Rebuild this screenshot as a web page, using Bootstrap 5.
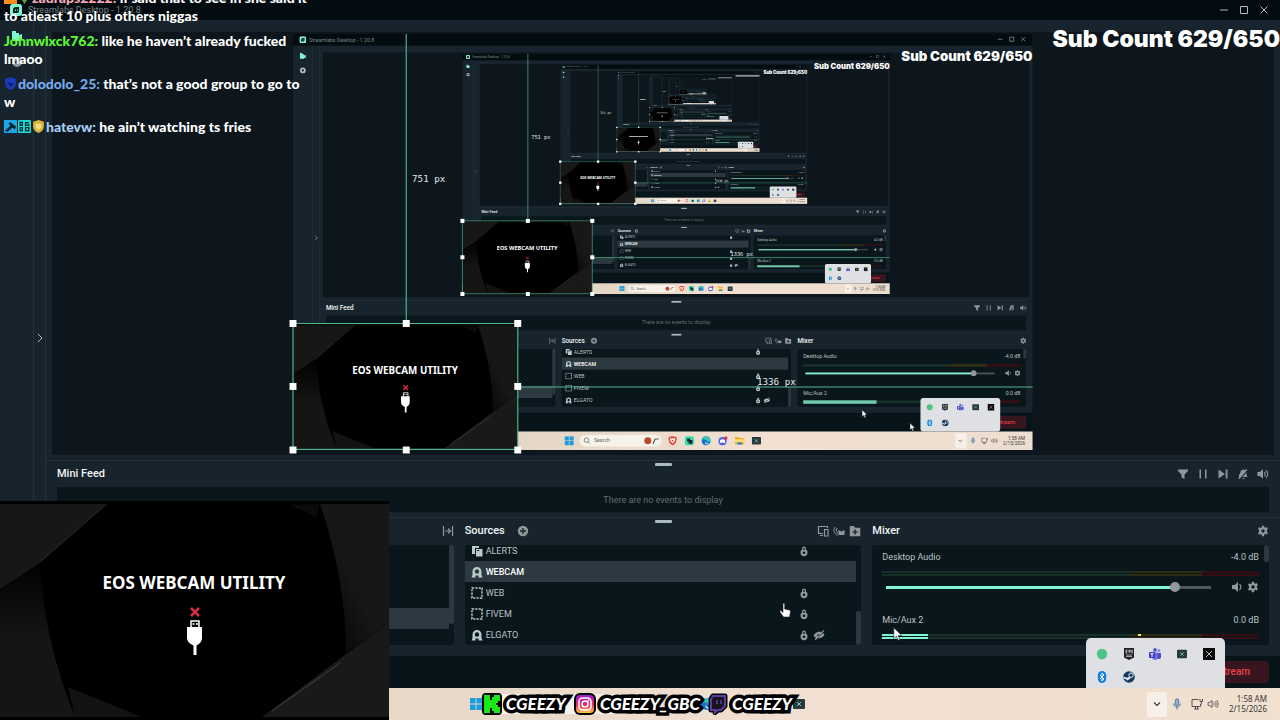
<!DOCTYPE html>
<html lang="en">
<head>
<meta charset="utf-8">
<meta name="viewport" content="width=device-width, initial-scale=1">
<title>Streamlabs Desktop</title>
<link href="https://cdn.jsdelivr.net/npm/bootstrap@5.3.0/dist/css/bootstrap.min.css" rel="stylesheet">
<style>
  :root { --panel:#17242d; --well:#09161c; --line:#24323a; --soft:#91979a; --ink:#bdc3c5; --mint:#80f5d2; }
  body { background:var(--panel); color:var(--ink); font-family:Roboto,"Liberation Sans",sans-serif; font-size:9px; line-height:12px; }
  body > * { flex-shrink:0; }
  body > .work { flex:1 1 0; min-height:0; }
  svg { display:block; flex:none; }
  .ico { width:12px; height:12px; fill:currentColor; color:var(--soft); }
  .bare { background:none; border:0; padding:0; color:inherit; }
  .titlebar { height:20px; background:#030c11; color:#7b8386; padding:0 10px; gap:6px; }
  .winbtns { gap:8px; }
  .side { width:34px; border-right:1px solid var(--line); padding-top:10px; gap:14px; }
  .fold { width:12px; border-right:1px solid var(--line); }
  .stage { flex:1 1 0; min-height:0; padding:12px 6px 5px 6px; }
  .canvas-well { flex:1 1 0; min-height:0; background:#0c161c; padding:2px 0 5px; }
  .canvas-well > svg { height:100%; aspect-ratio:16/9; overflow:visible; }
  .split { border-top:1px solid var(--line); }
  .grip { position:absolute; left:50%; top:2px; width:17px; height:3px; margin-left:-8px; border-radius:1px; background:#a9bac0; }
  .head { height:26px; }
  .feedhead { padding:0 11px; }
  .ttl { color:#f2f4f5; font-size:11px; line-height:16px; font-weight:500; margin:0; }
  .feed { height:25px; margin:0 11px 5px; background:var(--well); color:#626d72; border-radius:2px; }
  .docks { display:grid; grid-template-columns:repeat(3,minmax(0,1fr)); gap:11px; padding:0 11px 11px; }
  .well { height:100px; margin-top:1px; background:var(--well); border-radius:3px; overflow:hidden; position:relative; }
  .src { height:21px; flex:none; padding:0 31px 0 6px; margin-right:5px; gap:3px; list-style:none; }
  .src .slots { width:27px; gap:3px; }
  .src.on { background:#2d3940; color:#fff; font-weight:500; }
  .thumb { position:absolute; right:0; width:5px; border-radius:2px; background:#2d3940; }
  .mix { padding:6px 10px; }
  .meter { height:5px; margin:8px 0 6px; background:linear-gradient(var(--well),var(--well)) 0 2px/100% 1px no-repeat,linear-gradient(90deg,#18302a 66%,#2e2c12 66% 85%,#360d15 85%); position:relative; }
  .meter i { position:absolute; left:0; top:0; height:5px; border:solid var(--mint); border-width:2px 0; }
  .meter b { position:absolute; top:0; width:3px; height:2px; background:#f5e65a; }
  .fader { height:10px; margin:0 0 22px; gap:4px; padding-left:4px; }
  .vol { appearance:none; -webkit-appearance:none; height:10px; background:linear-gradient(var(--mint),var(--mint)) 0 50%/89% 3px no-repeat,linear-gradient(#4c585e,#4c585e) 0 50%/100% 3px no-repeat; margin:0; }
  .vol::-webkit-slider-thumb { -webkit-appearance:none; width:10px; height:10px; border-radius:50%; background:#91979a; }
  .foot { height:32px; background:#07141a; padding:0 11px; }
  .endbtn { background:#37161f; color:#e8424a; font-size:10px; height:22px; padding:0 19px; border:0; border-radius:3px; font-weight:500; line-height:22px; }
  .taskbar { height:32px; background:linear-gradient(90deg,#e3d7c4,#e9d9c9 40%,#f2dfd1 62%,#efe0d0); color:#3a3632; padding:0 13px 0 0; }
  .taskbar .apps { margin-left:470px; gap:16px; }
  .pill { width:141px; height:20px; border-radius:10px; background:#f8f3ea; margin-left:-5px; margin-right:-5px; }
  .more { width:20px; height:25px; background:#f7f0e8; border-radius:3px; }
  .clock { font-family:"Noto Sans",sans-serif; font-size:8px; line-height:10px; text-align:right; width:48px; }
  .tray { position:absolute; right:55px; bottom:32px; width:139px; height:50px; border-radius:5px 5px 0 0; background:#dee0e4; display:grid; grid-template-columns:repeat(5,1fr); padding:4px 3px 0; align-items:center; justify-items:center; }
  .cam { position:absolute; left:0; bottom:0; width:389px; height:219px; }
  .chat { position:absolute; left:0; top:0; width:308px; height:136px; padding-left:4px; overflow:hidden; display:flex; flex-direction:column; justify-content:flex-end; gap:7px; color:#fff; font:900 14px/18px Lato,"Open Sans",sans-serif; }
  .chat p { margin:0; }
  .chat svg { display:inline-block; width:13px; height:13px; margin-right:1px; vertical-align:-1px; }
  .subs { position:absolute; right:0; top:24px; color:#fff; font:900 23px/30px Inter,"Liberation Sans",sans-serif; }
  .socials { position:absolute; left:0; right:0; bottom:4px; gap:4px; padding-right:6px; font:italic 900 17px/24px Lato,sans-serif; color:#fff; }
  .socials span { -webkit-text-stroke:7px #000; paint-order:stroke fill; }
  .pointer { position:absolute; }
</style>
</head>
<body class="vh-100 overflow-hidden position-relative d-flex flex-column">

<svg width="0" height="0" class="position-absolute" aria-hidden="true">
  <defs>
    <linearGradient id="blade" x1="0" y1="0" x2="0" y2="1"><stop offset="0" stop-color="#020202"/><stop offset=".5" stop-color="#151515"/></linearGradient>
    <linearGradient id="blade2" x1="1" y1="0" x2="0" y2="1"><stop offset=".5" stop-color="#171717"/><stop offset="1" stop-color="#020202"/></linearGradient>
    <linearGradient id="insta" x1="0" y1="0" x2="0" y2="1"><stop offset="0" stop-color="#9a20d0"/><stop offset=".55" stop-color="#ee2a68"/><stop offset="1" stop-color="#ffc83d"/></linearGradient>
    <linearGradient id="bar" x1="0" x2="1"><stop offset=".3" stop-color="#e3d7c4"/><stop offset=".62" stop-color="#f2dfd1"/><stop offset="1" stop-color="#ecdfd0"/></linearGradient>
    <symbol id="logo" viewBox="0 0 12 12"><rect width="12" height="12" rx="3" fill="#80f5d2"/><path d="M3 6a3 3 0 0 1 3-3h3v4a2 2 0 0 1-2 2H3z" fill="#09161c"/><path d="M5.500 5.500v1.500M7.500 5.500v1.500" stroke="#80f5d2"/></symbol>
    <symbol id="camera" viewBox="0 0 12 12"><path d="M1 1h4v2h3v2l3-1v6l-3-1v2H1z" fill="#80f5d2"/></symbol>
    <symbol id="ring" viewBox="0 0 12 12"><path fill-rule="evenodd" d="M6 1a5 5 0 1 1 0 10A5 5 0 0 1 6 1zm0 3a2 2 0 1 0 0 4 2 2 0 0 0 0-4z"/></symbol>
    <symbol id="gear" viewBox="0 0 12 12"><path fill-rule="evenodd" d="M5 .8h2l.3 1.500 1 .5 1.400-.7 1.200 1.600-1 1.200v1.900l1 1.100-1.200 1.600-1.400-.7-1 .6L7 11.200H5l-.3-1.500-1-.6-1.500.7L1 8.200l1-1.200V5L1 3.800l1.200-1.600 1.500.7 1-.5zM6 4.300a1.700 1.700 0 1 0 0 3.400 1.700 1.700 0 0 0 0-3.400z"/></symbol>
    <symbol id="plus" viewBox="0 0 12 12"><path fill-rule="evenodd" d="M6 .8a5.200 5.200 0 1 1 0 10.400A5.200 5.200 0 0 1 6 .8zM5.300 3v2.300H3v1.400h2.300V9h1.400V6.700H9V5.300H6.700V3z"/></symbol>
    <symbol id="lock" viewBox="0 0 12 12"><path fill-rule="evenodd" d="M4 5V3.500a2 2 0 0 1 4 0V5h.5c.8.500 1 1.300 1 2.500C9.500 10 8 11.300 6 11.300S2.500 10 2.500 7.500c0-1.200.2-2 1-2.500zm1.200-.3h1.600V3.500c0-1-1.600-1-1.600 0zM6 6.500a1.300 1.300 0 1 0 0 2.600 1.300 1.300 0 0 0 0-2.600z"/></symbol>
    <symbol id="eye" viewBox="0 0 12 12"><path fill-rule="evenodd" d="M.5 6.500C2 3.500 6 2 8.500 3.300L10.300 1l1 .8-8.600 9.400-1-.9L3 8.900C1.800 8.300 1 7.500.5 6.500zM6.900 5C5 4.500 3.600 6 4.200 7.600zM11.500 5.500C10.600 8.200 7.600 9.800 5 9.300l5-5.200z"/></symbol>
    <symbol id="alerts" viewBox="0 0 12 12"><path d="M1 1h7v2H4v6H1z"/><path fill-rule="evenodd" d="M5 4h6.500v7.500H5zM6.200 6h2V5h-2z"/></symbol>
    <symbol id="webcam" viewBox="0 0 12 12"><path fill-rule="evenodd" d="M1.500 5.500a4.500 4.500 0 1 1 9 0V9l1 2.500H.5l1-2.500zM6 3.300a2.200 2.200 0 1 0 0 4.400 2.200 2.200 0 0 0 0-4.400zM4.500 9.500v2h3v-2z"/></symbol>
    <symbol id="dash" viewBox="0 0 12 12"><rect x="1" y="1" width="10" height="10" fill="none" stroke="currentColor" stroke-width="1.500" stroke-dasharray="2.200 1.130"/></symbol>
    <symbol id="filter" viewBox="0 0 12 12"><path d="M1 1.500h10v1.500L7.500 6.500v4.500l-3-1.500v-3L1 3z"/></symbol>
    <symbol id="pause" viewBox="0 0 12 12"><path d="M2.500 1.500H4v9H2.500zM8 1.500h1.500v9H8z"/></symbol>
    <symbol id="skip" viewBox="0 0 12 12"><path d="M1.500 1.500 8 6l-6.500 4.500zM8.700 1.500h1.800v9H8.700z"/></symbol>
    <symbol id="bell" viewBox="0 0 12 12"><path d="M2 8.500V7l1.200-1.500C3.300 2.500 5 1.500 6.500 1.500l1.700.7L9.500 1l1 .7L2.500 11l-1-.8zM9.500 4.500V7l1 2H5.500zM5.300 10h2.500c-.5 1.300-2 1.300-2.500 0z"/></symbol>
    <symbol id="sound" viewBox="0 0 12 12"><path d="M.5 4h2.300L6 1.300v9.400L2.800 8H.5z"/><path d="M7.300 4c1.200 1 1.200 3 0 4M8.800 2.200c2.600 2 2.600 5.600 0 7.600" fill="none" stroke="currentColor" stroke-width="1.100"/></symbol>
    <symbol id="sound1" viewBox="0 0 12 12"><path d="M1 4h2.600L7 1v10L3.600 8H1z"/><path d="M8.500 3.300c1.800 1.500 1.800 4 0 5.400" fill="none" stroke="currentColor" stroke-width="1.200"/></symbol>
    <symbol id="split" viewBox="0 0 12 12"><path d="M1.500 1v10M10.500 1v10M3 6h5M6 3.500 8.500 6 6 8.500" fill="none" stroke="currentColor" stroke-width="1.200"/></symbol>
    <symbol id="screens" viewBox="0 0 12 12"><path d="M6 8.500H1.500v-7h9V3M3 10.500h3M7.500 4.500h3.500v6.500H7.500z" fill="none" stroke="currentColor" stroke-width="1.200"/></symbol>
    <symbol id="wave" viewBox="0 0 12 12"><path d="M2 2C0 5 1 8.500 4.500 10.500M4 3C2.700 5.500 3.500 7.800 6 9.500" fill="none" stroke="currentColor" stroke-width="1"/><path d="M5 5l3.500 1.500 3-1.500v5H6z"/></symbol>
    <symbol id="folder" viewBox="0 0 12 12"><path fill-rule="evenodd" d="M.8 1h4l1.500 1.800h5v8.400H.8zM5.400 4.500v1.800H3.600v1.300h1.800v1.800h1.300V7.600h1.800V6.300H6.700V4.500z"/></symbol>
    <symbol id="win" viewBox="0 0 12 12"><path fill="#1d9bdc" d="M0 0h5.600v5.600H0zM6.400 0H12v5.600H6.400zM0 6.400h5.600V12H0zM6.400 6.400H12V12H6.400z"/></symbol>
    <symbol id="brave" viewBox="0 0 12 12"><path fill="#e8402c" d="M3 0h6l2.500 2.500L10 9l-4 3-4-3L.5 2.500z"/><path fill="#fff" d="m2.500 2.500 2 .5h3l2-.5-.8 4L6 9.500 3.300 6.500z"/><path fill="#e8402c" d="m4.300 4.500 1.700.8 1.700-.8L6 8z"/></symbol>
    <symbol id="green" viewBox="0 0 12 12"><rect width="12" height="12" rx="3" fill="#35dca2"/><path d="M3 3h4v2h3v5H5V7H3z" fill="#123"/></symbol>
    <symbol id="edge" viewBox="0 0 12 12"><circle cx="6" cy="6" r="6" fill="#1273c4"/><path d="M0 5c1-6 11-7 12 0 0 3-4 3-5 2 1-2-4-4-7-2z" fill="#39c6b4"/><path d="M5 6.500c0 3 3 4 6 2.500-2 3-8 2-6-2.500z" fill="#e8f4f8"/></symbol>
    <symbol id="discord" viewBox="0 0 12 12"><circle cx="5.500" cy="6.500" r="5.500" fill="#5560e6"/><path d="M2.500 5c2-1.300 4-1.300 6 0l.7 3.500-2 .5-.5-.8H4.500L4 9l-2-.5z" fill="#fff"/><circle cx="10" cy="2.300" r="2.300" fill="#d8304a"/></symbol>
    <symbol id="files" viewBox="0 0 12 12"><path d="M0 1h5l1 1.500h6V11H0z" fill="#eeb420"/><path d="M0 4h12v4H0z" fill="#ffdf6a"/><path d="M3 8h6v3H3z" fill="#2b84d0"/></symbol>
    <symbol id="deck" viewBox="0 0 12 12"><rect y="1" width="12" height="10" rx="1" fill="#253c3c"/><path d="m4 4 4 4m0-4L4 8" stroke="#a9c6c0" stroke-width=".9"/></symbol>
    <symbol id="xbox" viewBox="0 0 12 12"><rect width="12" height="12" fill="#080808"/><path d="m3 3 6 6m0-6L3 9" stroke="#b5b5b5" stroke-width="1"/></symbol>
    <symbol id="dot" viewBox="0 0 12 12"><circle cx="6" cy="6" r="5.200" fill="#4cc283"/></symbol>
    <symbol id="epic" viewBox="0 0 12 12"><path d="M1 0h10v9.500L6 12 1 9.500z" fill="#202124"/><path d="M3 2v3m0-3h1.500M3 3.500h1.300M3 5h1.500M6 5V2h1v1.500H6M8 2v3m2-3H9v3h1M3 7h6M3 8.500h6" stroke="#ddd" stroke-width=".7" fill="none"/></symbol>
    <symbol id="teams" viewBox="0 0 12 12"><circle cx="6" cy="2" r="1.900" fill="#5059c9"/><circle cx="10" cy="2.700" r="1.400" fill="#7b83eb"/><path d="M3 4.500h6V10c-1 2.500-5 2.500-6 0z" fill="#7070e8"/><path d="M8.500 5H12v4.500c-.6 1.500-2.500 2-3.500 1z" fill="#4a4fc0"/><rect y="4" width="6" height="6" rx="1" fill="#4339b8"/><path d="M1.500 5.700h3M3 5.700V9" stroke="#fff"/></symbol>
    <symbol id="bt" viewBox="0 0 12 12"><rect x="1.800" y="0" width="8.400" height="12" rx="4.200" fill="#1583dc"/><path d="m4 4 4 4-2 2V2l2 2-4 4" fill="none" stroke="#fff" stroke-width=".9"/></symbol>
    <symbol id="steam" viewBox="0 0 12 12"><circle cx="6" cy="6" r="5.800" fill="#183a5e"/><path d="M.5 6.500 5 8l2-1.500M7 6l-3 3" stroke="#e8eef4" stroke-width="1.700"/><circle cx="8" cy="4.200" r="2.200" fill="#183a5e" stroke="#e8eef4"/></symbol>
    <symbol id="chev" viewBox="0 0 12 12"><path d="m3 4.500 3 3 3-3" fill="none" stroke="#333" stroke-width="1.100"/></symbol>
    <symbol id="mic" viewBox="0 0 12 12"><rect x="4.300" y=".8" width="3.400" height="6.500" rx="1.700" fill="#8bb0cf" stroke="#3f6f9c" stroke-width=".8"/><path d="M2.800 5.500c0 4.500 6.400 4.500 6.400 0M6 9v2.500" fill="none" stroke="#3f6f9c"/></symbol>
    <symbol id="net" viewBox="0 0 12 12"><path d="M7.500 1.500H1v7h8.500V6M3 11h5M4.500 8.500V11M6.500 8.500V11M9 1v2.500h2.500V1M10.300 3.500V6.500" fill="none" stroke="#444" stroke-width=".9"/></symbol>
    <symbol id="spk" viewBox="0 0 12 12"><path d="M1 4.500h1.700L5 2.500v7l-2.300-2H1zM6.500 4.500c.8 1 .8 2 0 3M8 3.200c1.600 1.800 1.600 3.800 0 5.600M9.500 2c2.200 2.500 2.200 5.500 0 8" fill="none" stroke="#444" stroke-width=".8"/></symbol>
    <symbol id="min" viewBox="0 0 12 12"><path d="M2 6h8" stroke="#b4b9bb"/></symbol>
    <symbol id="max" viewBox="0 0 12 12"><path d="M2.500 2.500h7v7h-7z" fill="none" stroke="#b4b9bb"/></symbol>
    <symbol id="close" viewBox="0 0 12 12"><path d="m2.500 2.500 7 7m0-7-7 7" stroke="#b4b9bb"/></symbol>
    <symbol id="arrow" viewBox="0 0 12 18"><path d="M1 1v13l3-3 2.200 5 2-1L6 10.200h4.500z" fill="#fff" stroke="#222" stroke-width=".7"/></symbol>
  </defs>
</svg>

<header class="titlebar d-flex align-items-center">
  <svg class="ico"><use href="#logo"/></svg>
  <span class="me-auto">Streamlabs Desktop - 1.20.8</span>
  <div class="winbtns d-flex">
    <button class="bare" aria-label="Minimize"><svg class="ico"><use href="#min"/></svg></button>
    <button class="bare" aria-label="Maximize"><svg class="ico"><use href="#max"/></svg></button>
    <button class="bare" aria-label="Close"><svg class="ico"><use href="#close"/></svg></button>
  </div>
</header>

<div class="work d-flex">
  <nav class="side d-flex flex-column align-items-center">
    <button class="bare" aria-label="Editor"><svg class="ico"><use href="#camera"/></svg></button>
    <button class="bare" aria-label="Settings"><svg class="ico"><use href="#ring"/></svg></button>
  </nav>
  <div class="fold d-flex align-items-center justify-content-center">
    <button class="bare" aria-label="Expand"><svg width="6" height="10" viewBox="0 0 6 10"><path d="m1 1 4 4-4 4" fill="none" stroke="#b4b9bb"/></svg></button>
  </div>
  <main class="flex-grow-1 d-flex flex-column" style="min-width:0">
    <div class="stage d-flex flex-column">
      <div class="canvas-well d-flex justify-content-center" id="preview"></div>
    </div>

    <section class="split position-relative">
      <span class="grip"></span>
      <div class="head feedhead d-flex align-items-center">
        <h2 class="ttl me-auto">Mini Feed</h2>
        <div class="d-flex gap-2">
          <button class="bare" aria-label="Filter"><svg class="ico"><use href="#filter"/></svg></button>
          <button class="bare" aria-label="Pause"><svg class="ico"><use href="#pause"/></svg></button>
          <button class="bare" aria-label="Skip"><svg class="ico"><use href="#skip"/></svg></button>
          <button class="bare" aria-label="Mute alerts"><svg class="ico"><use href="#bell"/></svg></button>
          <button class="bare" aria-label="Sound"><svg class="ico"><use href="#sound"/></svg></button>
        </div>
      </div>
      <div class="feed d-flex align-items-center justify-content-center">There are no events to display</div>
    </section>

    <section class="split position-relative">
      <span class="grip"></span>
      <div class="docks">
        <div>
          <div class="head d-flex align-items-center justify-content-end"><button class="bare" aria-label="Collapse scenes"><svg class="ico"><use href="#split"/></svg></button></div>
          <div class="well d-flex flex-column justify-content-end">
            <div class="src on mb-3"></div>
            <span class="thumb" style="top:0;height:79px"></span>
          </div>
        </div>
        <div>
          <div class="head d-flex align-items-center">
            <h2 class="ttl">Sources</h2>
            <button class="bare ms-2 ps-1 me-auto" aria-label="Add source"><svg class="ico"><use href="#plus"/></svg></button>
            <div class="d-flex gap-1">
              <button class="bare" aria-label="Screens"><svg class="ico"><use href="#screens"/></svg></button>
              <button class="bare" aria-label="Guest cam"><svg class="ico"><use href="#wave"/></svg></button>
              <button class="bare" aria-label="Add folder"><svg class="ico"><use href="#folder"/></svg></button>
            </div>
          </div>
          <div class="well">
            <ul class="h-100 m-0 p-0 d-flex flex-column justify-content-end" id="sources"></ul>
            <span class="thumb" style="bottom:0;height:34px"></span>
          </div>
        </div>
        <div>
          <div class="head d-flex align-items-center justify-content-between">
            <h2 class="ttl">Mixer</h2>
            <button class="bare" aria-label="Mixer settings"><svg class="ico"><use href="#gear"/></svg></button>
          </div>
          <div class="well mix">
            <div class="d-flex justify-content-between"><label for="vol1">Desktop Audio</label><span>-4.0 dB</span></div>
            <div class="meter"></div>
            <div class="fader d-flex align-items-center">
              <input type="range" class="vol flex-grow-1" id="vol1" min="0" max="100" value="90">
              <svg class="ico ms-3"><use href="#sound1"/></svg>
              <svg class="ico"><use href="#gear"/></svg>
            </div>
            <div class="d-flex justify-content-between"><span>Mic/Aux 2</span><span>0.0 dB</span></div>
            <div class="meter"><i style="width:12%"></i><b style="left:68%"></b></div>
            <span class="thumb" style="top:0;height:17px"></span>
          </div>
        </div>
      </div>
    </section>
  </main>
</div>

<footer class="foot d-flex align-items-center justify-content-end"><button class="endbtn">End Stream</button></footer>

<div class="taskbar d-flex align-items-center">
  <div class="apps d-flex align-items-center me-auto">
    <svg class="ico"><use href="#win"/></svg>
    <span class="pill"></span>
    <svg class="ico"><use href="#brave"/></svg>
    <svg class="ico"><use href="#green"/></svg>
    <svg class="ico"><use href="#edge"/></svg>
    <svg class="ico"><use href="#discord"/></svg>
    <svg class="ico"><use href="#files"/></svg>
    <svg class="ico ms-2 me-1"><use href="#deck"/></svg>
  </div>
  <button class="more bare d-flex align-items-center justify-content-center" aria-label="Hidden icons"><svg class="ico"><use href="#chev"/></svg></button>
  <svg class="ico ms-1 me-2"><use href="#mic"/></svg>
  <svg class="ico"><use href="#net"/></svg>
  <svg class="ico ms-1"><use href="#spk"/></svg>
  <div class="clock">1:58 AM<br>2/15/2026</div>
</div>

<div class="tray">
  <svg class="ico"><use href="#dot"/></svg><svg class="ico"><use href="#epic"/></svg><svg class="ico"><use href="#teams"/></svg><svg class="ico" style="width:10px"><use href="#deck"/></svg><svg class="ico"><use href="#xbox"/></svg>
  <svg class="ico"><use href="#bt"/></svg><svg class="ico"><use href="#steam"/></svg>
</div>

<div class="cam" id="cam"></div>

<svg class="pointer" style="left:893px;top:627px" width="10" height="15"><use href="#arrow"/></svg>
<svg class="pointer" style="left:779px;top:602px" width="12" height="17" viewBox="0 0 12 17"><path d="M4 1.500c1-.8 1.700 0 1.700 1V7l4.500 1c1.200.3 1.300 1 1.200 2l-.8 5H4.500L1 10c-.6-1 .6-1.800 1.400-1L4 10.500z" fill="#fff" stroke="#222" stroke-width=".6"/></svg>

<div class="chat">
  <p><svg viewBox="0 0 12 12"><rect width="12" height="12" fill="#ff8a1d"/></svg><svg viewBox="0 0 12 12"><path d="M6 1l4 5-4 6-4-6z" fill="#5a9a3c"/></svg><span style="color:#f5a9b5">zadraps2222:</span> if said that to see in she said it to atleast 10 plus others niggas</p>
  <p><span style="color:#5dfa37">Johnwlxck762:</span> like he haven’t already fucked lmaoo</p>
  <p><svg viewBox="0 0 12 12"><path d="M1 2c3-2 7-2 10 0v4c0 3-2 5-5 6-3-1-5-3-5-6z" fill="#1c3bb8"/><path d="m3 5 6 1-3 3z" fill="#0b1c70"/></svg><span style="color:#79a9ee">dolodolo_25:</span> that’s not a good group to go to w</p>
  <p class="text-nowrap"><svg viewBox="0 0 12 12"><rect width="12" height="12" fill="#1aa7e8"/><path d="m1 10 5-5-2-2 2-1 5 4-1 3-2-2-5 4z" fill="#07202e"/></svg><svg viewBox="0 0 12 12"><rect width="12" height="12" rx="1" fill="#22d8d2"/><path d="M2 2h2v3H2zM2 7h2v3H2zM10 2.500H7V5h3V4M7 7h3v3H7z" fill="none" stroke="#06343a" stroke-width="1.300"/></svg><svg viewBox="0 0 12 12"><path d="M1 1.500 6 0l5 1.500V6c0 3-2 5-5 6-3-1-5-3-5-6z" fill="#d8b33c"/><path d="M3.500 3.500h5V7L6 9.500 3.500 7z" fill="#f6df82"/></svg><span style="color:#a6cdf5">hatevw:</span> he ain’t watching ts fries</p>
</div>

<div class="subs">Sub Count 629/650</div>

<div class="socials d-flex justify-content-center align-items-center">
  <svg width="20" height="22" viewBox="0 0 20 22"><rect width="20" height="22" rx="4"/><path d="M2 2h6v5h2V4h2V2h6v6h-2v2h-2v2h2v2h2v6h-6v-2h-2v-3H8v5H2z" fill="#1be818"/></svg>
  <span>CGEEZY</span>
  <svg class="ms-1" width="22" height="22" viewBox="0 0 22 22"><rect width="22" height="22" rx="6"/><rect x="2" y="2" width="18" height="18" rx="4" fill="url(#insta)"/><rect x="5" y="5" width="12" height="12" rx="3.500" fill="none" stroke="#fff" stroke-width="1.500"/><circle cx="11" cy="11" r="3" fill="none" stroke="#fff" stroke-width="1.500"/><circle cx="14.500" cy="7.500" r=".9" fill="#fff"/></svg>
  <span>CGEEZY_GBC</span>
  <svg class="ms-1" width="20" height="22" viewBox="0 0 20 22"><path d="m5 3-2 3v11h4v2.500l3-2.500h3l4-4V3z" fill="#17131f" stroke="#000" stroke-width="5" stroke-linejoin="round"/><path d="m5 3-2 3v11h4v2.500l3-2.500h3l4-4V3z" fill="#17131f" stroke="#5a3ca0" stroke-width="2"/><path d="M9 7v4M13 7v4" stroke="#5a3ca0" stroke-width="1.500"/></svg>
  <span>CGEEZY</span>
</div>

<script src="https://cdn.jsdelivr.net/npm/bootstrap@5.3.0/dist/js/bootstrap.bundle.min.js"></script>
<script>
const SOURCES = [["ALERTS","alerts",1,0],["WEBCAM","webcam",0,0],["WEB","dash",1,0],["FIVEM","dash",1,0],["ELGATO","webcam",1,1]];
let tiny = false; // inner copies too small to read get bars in place of words
const use = (id, cx, cy, s = 12) => `<use href="#${id}" x="${cx - s/2}" y="${cy - s/2}" width="${s}" height="${s}"/>`;
const rect = (x, y, w, h, c, r = 0) => `<rect x="${x}" y="${y}" width="${w}" height="${h}" rx="${r}" fill="${c}"/>`;
const text = (s, x, y, c = "#bdc3c5", size = 9, extra = "") => {
  if (!tiny) return `<text x="${x}" y="${y}" fill="${c}" font-size="${size}" ${extra}>${s}</text>`;
  const w = s.length * size * .55, left = extra.includes('"end"') ? x - w : extra.includes('"middle"') ? x - w/2 : x;
  return `<rect x="${left}" y="${y - size*.6}" width="${w}" height="${size*.5}" fill="${c}" opacity=".7"/>`;
};

document.getElementById("sources").innerHTML = SOURCES.map(([n, i, lock, hid], k) =>
  `<li class="src d-flex align-items-center ${k === 1 ? "on" : ""}"><svg class="ico" style="color:#b9cbc9"><use href="#${i}"/></svg><span class="me-auto">${n}</span>
   <span class="slots d-flex">${lock ? '<svg class="ico"><use href="#lock"/></svg>' : ""}${hid ? '<svg class="ico"><use href="#eye"/></svg>' : ""}</span></li>`).join("");

// Webcam placeholder card, drawn in a 389 x 219 box
function card() {
  return `<rect width="389" height="219" fill="#000"/>
  <path d="M0 3H107L40 62 0 88z" fill="#171717"/><path d="M107 3 40 61" stroke="#343434" stroke-width=".6"/>
  <path d="M0 88 40 62Q44 140 75 216H0z" fill="url(#blade)"/>
  <path d="M320 3H389V121L346 152Q346 80 320 3z" fill="url(#blade2)"/>
  <path d="M290 4 316 16 320 3z" fill="#0b0b0b"/>
  <path d="M262 216 389 121V216z" fill="#191919"/><path d="m272 210 68-48" stroke="#555" stroke-width=".7"/>
  <path d="M68 186 142 216H75z" fill="#121212"/>
  ${text("EOS WEBCAM UTILITY",194,88,"#fff",17,'text-anchor="middle" font-family="Noto Sans, sans-serif" font-weight="700"')}
  <path d="m191 107 8 8m0-8-8 8" stroke="#d22f43" stroke-width="2.500"/>
  <path d="M191 127v-7h8v7" fill="none" stroke="#fff" stroke-width="1.500"/><path d="M192.500 123h2m1.500 0h2" stroke="#fff" stroke-width="1.500"/>
  <path d="M187 126h15v11q0 5-5.500 7.500V154h-3v-9.500Q187 142 187 137z" fill="#fff"/>`;
}
document.getElementById("cam").innerHTML = `<svg class="w-100 h-100" viewBox="0 0 389 219">${card()}</svg>`;

// One captured desktop; its own canvas shows the capture again until depth runs out
function desktop(depth, top) {
  let s = rect(0,0,1280,720,"#17242d") + rect(0,0,1280,20,"#030c11") + use("logo",17,10) + text("Streamlabs Desktop - 1.20.8",28,13,"#7b8386")
    + use("min",1224,9) + use("max",1244,9) + use("close",1264,9) + use("camera",17,38) + `<g fill="#b4b9bb">${use("ring",17,63)}</g>`
    + rect(33,20,1,640,"#24323a") + rect(46,20,1,640,"#24323a") + rect(52,32,1222,423,"#0c161c")
    + `<path d="m38 349 4 4-4 4" fill="none" stroke="#b4b9bb"/>`;
  if (depth > 0) s += `<svg x="293" y="34" width="740" height="416" viewBox="0 0 1280 720" overflow="visible">${capture(depth - 1, false)}</svg>`;
  tiny = depth < 4;
  s += rect(46,460,1234,1,"#24323a") + rect(655,462,17,3,"#a9bac0") + text("Mini Feed",57,478,"#f2f4f5",11,'font-weight="500"')
    + `<g fill="#91979a" color="#91979a">${["filter","pause","skip","bell","sound"].map((n,i)=>use(n,1184+20*i,474)).join("")}${use("split",449,531)}${use("plus",521,531)}${use("screens",823,531)}${use("wave",840,531)}${use("folder",857,531)}${use("gear",1264,531)}</g>`
    + rect(57,487,1212,25,"#09161c",2) + text("There are no events to display",663,502,"#626d72",9,'text-anchor="middle"')
    + rect(46,517,1234,1,"#24323a") + rect(655,519,17,3,"#a9bac0")
    + text("Sources",465,535,"#f2f4f5",11,'font-weight="500"') + text("Mixer",873,535,"#f2f4f5",11,'font-weight="500"')
    + rect(57,545,397,100,"#09161c",3) + rect(57,609,392,21,"#2d3940") + rect(449,545,5,79,"#2d3940",2)
    + rect(465,545,397,100,"#09161c",3) + rect(465,560,392,21,"#2d3940") + rect(857,611,5,34,"#2d3940",2)
    + `<g fill="#b9cbc9" color="#b9cbc9">${SOURCES.map(([n,i,l,h],k)=>use(i,477,550+21*k)+text(n,486,553+21*k,k===1?"#fff":"#bdc3c5",9,k===1?'font-weight="500"':"")+(l?use("lock",805,550+21*k):"")+(h?use("eye",820,550+21*k):"")).join("")}</g>`
    + rect(873,545,396,100,"#09161c",3) + rect(1264,545,5,17,"#2d3940",2)
    + text("Desktop Audio",883,560) + text("-4.0 dB",1259,560,"#bdc3c5",9,'text-anchor="end"')
    + [571,634].map(y=>rect(883,y,250,5,"#18302a")+rect(1133,y,69,5,"#2e2c12")+rect(1202,y,57,5,"#360d15")).join("")
    + rect(887,586,327,3,"#4c585e") + rect(887,586,291,3,"#80f5d2") + `<circle cx="1178" cy="587" r="5" fill="#91979a"/><g fill="#91979a" color="#91979a">${use("sound1",1238,587)}${use("gear",1254,587)}</g>`
    + text("Mic/Aux 2",883,624) + text("0.0 dB",1259,624,"#bdc3c5",9,'text-anchor="end"') + rect(883,634,127,6,"#70c9ae")
    + rect(0,656,1280,32,"#07141a") + rect(1171,661,98,22,"#37161f",3) + text("Stream",1250,675,"#e8424a",10,'text-anchor="end"')
    + rect(0,688,1280,32,"url(#bar)") + use("win",478,704,16) + rect(496,694,142,20,"#f8f3ea",10)
    + `<circle cx="508" cy="703" r="4" fill="none" stroke="#444"/><path d="m511 706 3 3" stroke="#444"/>` + text("Search",521,707,"#666",9)
    + `<circle cx="614" cy="704" r="6" fill="#b8482c"/><path d="m623 709 4-8 6 0" fill="none" stroke="#555" stroke-width="2"/>`
    + ["brave","green","edge","discord","files","deck"].map((n,i)=>use(n,657+29*i,704,16)).join("")
    + rect(1146,691,20,26,"#f7f0e8",3) + use("chev",1155,704) + use("mic",1177,704) + use("net",1197,704) + use("spk",1214,704)
    + text("1:58 AM",1267,702,"#3a3632",8,'text-anchor="end"') + text("2/15/2026",1267,712,"#3a3632",8,'text-anchor="end"')
    + rect(1086,630,138,58,"#dee0e4",5) + ["dot","epic","teams","deck","xbox"].map((n,i)=>use(n,1102+26.5*i,646)).join("") + use("bt",1102,673) + use("steam",1129,673)
    + text("Sub Count 629/650",1280,47,"#fff",23,'text-anchor="end" font-weight="900" font-family="Inter, sans-serif"')
    + `<svg x="0" y="501" width="389" height="219" viewBox="0 0 389 219">${card()}</svg>`;
  if (top) s += `<use href="#arrow" x="984" y="650" width="11" height="16"/><use href="#arrow" x="1067" y="673" width="11" height="16"/>`;
  return s;
}

// The capture with its selection frame and distance guides
function capture(depth, top) {
  tiny = depth < 4;
  return desktop(depth, top)
    + `<g fill="none" stroke="#54b48c" stroke-width="2"><path d="M0 501H389V719H0zM196 0V501M389 611H1280"/></g>`
    + [[0,501],[196,501],[389,501],[0,610],[389,610],[0,720],[196,720],[389,720]].map(([x,y])=>rect(x-6,y-6,12,12,"#fff")).join("")
    + text("751 px",206,256,"#e6eaec",16,'font-family="DejaVu Sans Mono, monospace"')
    + text("1336 px",803,607,"#e6eaec",16,'font-family="DejaVu Sans Mono, monospace"');
}
document.getElementById("preview").innerHTML = `<svg viewBox="0 0 1280 720">${capture(6, true)}</svg>`;
</script>
</body>
</html>
